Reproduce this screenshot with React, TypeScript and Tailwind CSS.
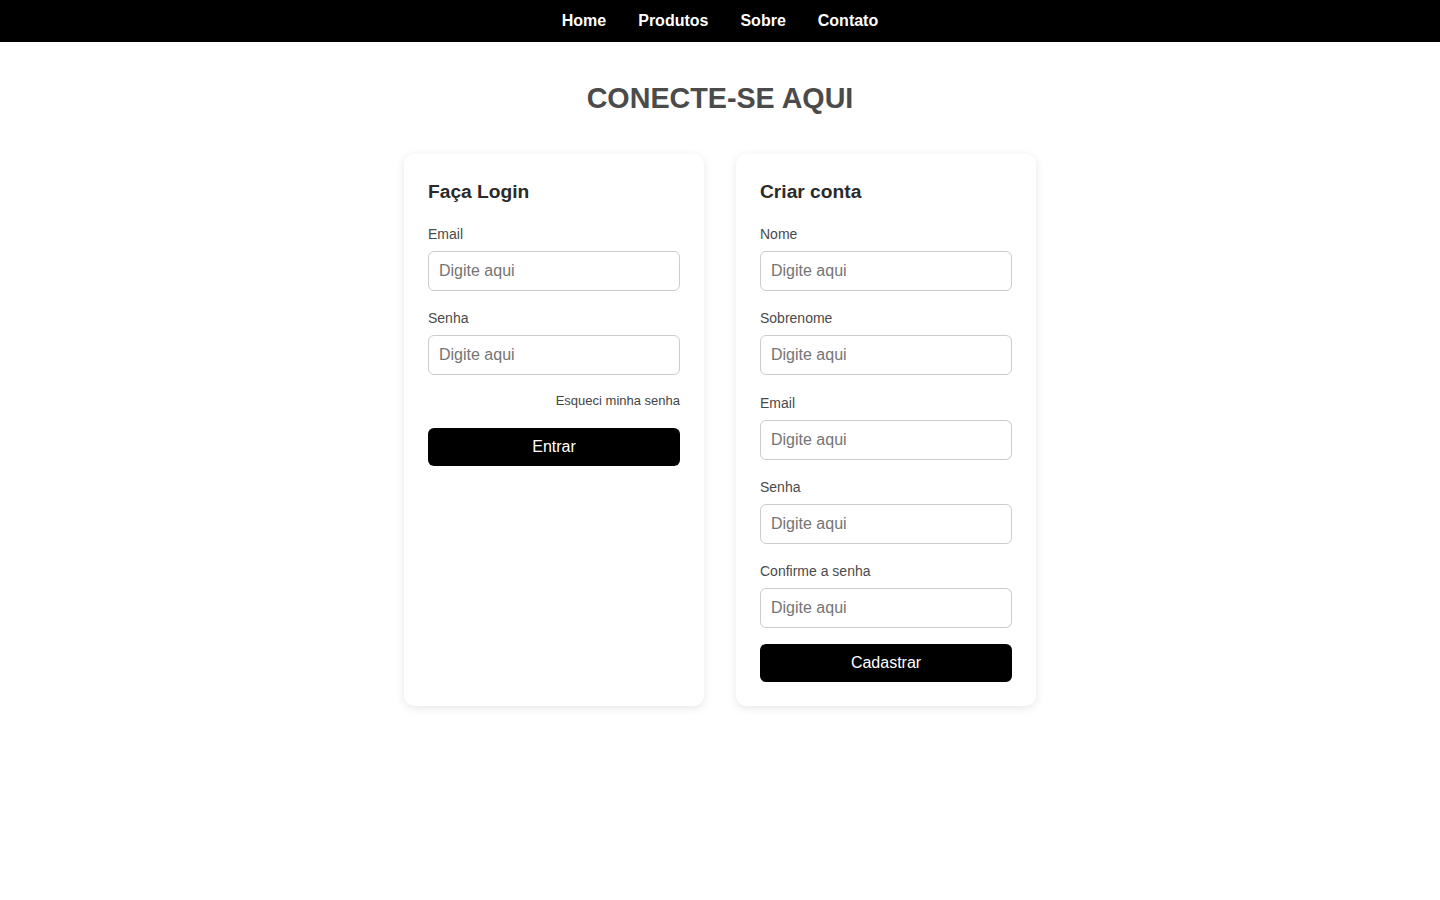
const navLinks = ["Home", "Produtos", "Sobre", "Contato"]

function Field({ label, last }: { label: string; last?: boolean }) {
  return (
    <div className={last ? "mb-4" : "mb-[19.3px]"}>
      <label className="mb-2 block text-[14px] leading-[17px] text-[#4a4a4a]">
        {label}
      </label>
      <input
        type="text"
        placeholder="Digite aqui"
        className="block h-10 w-full rounded-md border border-[#ccc] bg-white px-[10px] text-[16px] text-[#333] placeholder:text-[#757575] focus:outline-none"
      />
    </div>
  )
}

function Card({ children }: { children: React.ReactNode }) {
  return (
    <div className="flex w-[300px] flex-col rounded-[10px] bg-white p-6 shadow-[0_2px_10px_rgba(0,0,0,0.1)]">
      {children}
    </div>
  )
}

export default function App() {
  return (
    <div className="min-h-screen bg-white font-['Liberation_Sans',Arial,sans-serif]">
      <nav className="flex h-[42px] items-center justify-center gap-8 bg-black">
        {navLinks.map((link) => (
          <a
            key={link}
            href="#"
            className="text-[16px] font-bold leading-none text-white"
          >
            {link}
          </a>
        ))}
      </nav>

      <h1 className="pt-[38px] text-center text-[28.7px] font-bold leading-[36px] text-[#4b4b4b]">
        CONECTE-SE AQUI
      </h1>

      <div className="mt-[38px] flex items-stretch justify-center gap-8">
        {/* ------------------------------ Login ------------------------------ */}
        <Card>
          <h2 className="mb-5 text-[19.2px] font-bold leading-7 text-[#2a2a2a]">
            Faça Login
          </h2>
          <Field label="Email" />
          <Field label="Senha" last />
          <div className="mt-px mb-[19px] text-right text-[13px] leading-[17px] text-[#444]">
            <a href="#">Esqueci minha senha</a>
          </div>
          <button className="h-[38px] w-full rounded-md bg-black text-[16px] text-white">
            Entrar
          </button>
        </Card>

        {/* --------------------------- Criar conta --------------------------- */}
        <Card>
          <h2 className="mb-5 text-[19.2px] font-bold leading-7 text-[#2a2a2a]">
            Criar conta
          </h2>
          <Field label="Nome" />
          <Field label="Sobrenome" />
          <Field label="Email" />
          <Field label="Senha" />
          <Field label="Confirme a senha" last />
          <button className="h-[38px] w-full rounded-md bg-black text-[16px] text-white">
            Cadastrar
          </button>
        </Card>
      </div>
    </div>
  )
}
